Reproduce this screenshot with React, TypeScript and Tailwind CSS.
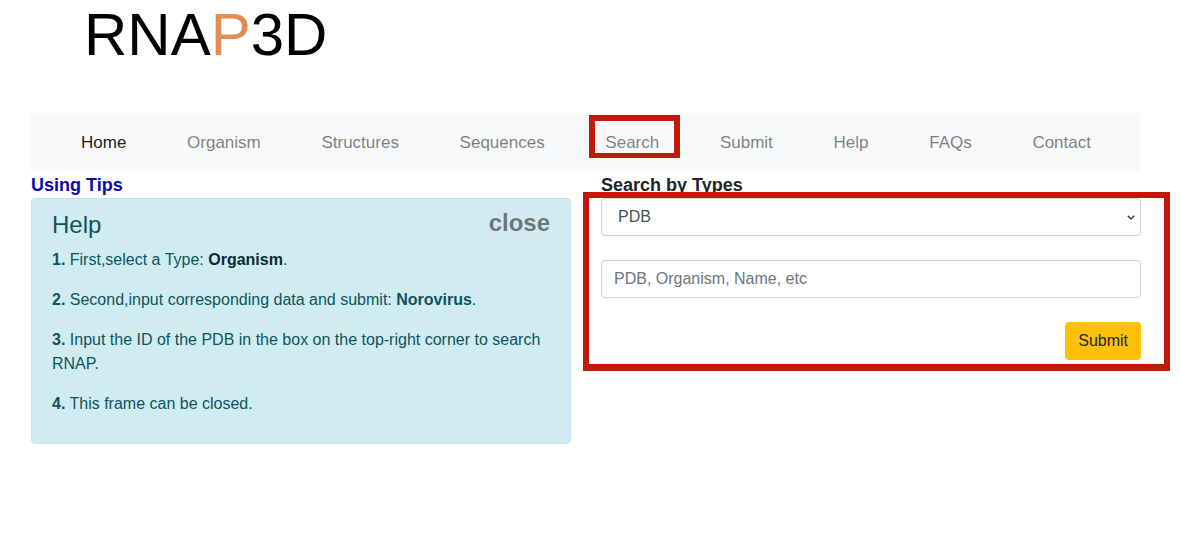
const navItems = ["Home", "Organism", "Structures", "Sequences", "Search", "Submit", "Help", "FAQs", "Contact"];

export default function App() {
  return (
    <main className="relative min-h-[542px] bg-white font-['Liberation_Sans',Arial,sans-serif] text-[16px] leading-6 text-[#212529]">
      <header className="h-[113px] pl-[84px]">
        <h1 className="text-[60px] leading-[69px] font-normal text-black">
          RNA<span className="text-[#e08e55]">P</span>3D
        </h1>
      </header>

      <div className="ml-[31px] w-[1110px]">
        <nav className="flex h-[58px] w-[1109px] items-center gap-[60.7px] bg-[#f8f9fa] pt-[2px] pl-[50px] text-[17px]">
          {navItems.map((item) => (
            <a key={item} href="#" className={item === "Home" ? "text-black/90" : "text-black/50"}>
              {item}
            </a>
          ))}
        </nav>

        <section className="grid grid-cols-2 gap-[30px]">
          <div>
            <h2 className="h-[27px] text-[18px] leading-[28px] font-bold text-[#0a0aa8]">Using Tips</h2>
            <div className="h-[246px] rounded border border-[#bee5eb] bg-[#d1ecf1] px-5 pt-[12px] text-[#0c5460]">
              <div className="flex items-start justify-between">
                <h3 className="mb-[9px] text-[24px] leading-[28px] font-normal">Help</h3>
                <button className="text-[24px] leading-[24px] font-bold text-black/50">close</button>
              </div>
              <p className="mb-4"><b>1.</b> First,select a Type: <b className="text-[#062c33]">Organism</b>.</p>
              <p className="mb-4"><b>2.</b> Second,input corresponding data and submit: <b>Norovirus</b>.</p>
              <p className="mb-4"><b>3.</b> Input the ID of the PDB in the box on the top-right corner to search RNAP.</p>
              <p><b>4.</b> This frame can be closed.</p>
            </div>
          </div>

          <div>
            <h2 className="h-[27px] text-[18px] leading-[28px] font-bold text-[#212529]">Search by Types</h2>
            <div className="relative">
              <select className="block h-[38px] w-full appearance-none rounded border border-[#ced4da] bg-white pl-4 text-[16px] text-[#495057]">
                <option>PDB</option>
                <option>Organism</option>
                <option>Name</option>
              </select>
              <svg viewBox="0 0 8 5" className="pointer-events-none absolute top-[17px] right-[6px] h-[5px] w-[8px]" fill="none" stroke="#343a40" strokeWidth="1.3">
                <path d="M.7.7L4 4 7.3.7" />
              </svg>
            </div>
            <input
              placeholder="PDB, Organism, Name, etc"
              className="mt-6 block h-[38px] w-full rounded border border-[#ced4da] bg-white px-3 text-[16px] text-[#495057] placeholder:text-[#6c757d]"
            />
            <div className="mt-6 flex justify-end">
              <button className="h-[38px] rounded bg-[#ffc107] px-[13px] text-[#212529]">Submit</button>
            </div>
          </div>
        </section>
      </div>

      {/* red annotation frames */}
      <div className="absolute top-[115px] left-[589px] h-[43px] w-[91px] border-x-[6px] border-t-[6px] border-b-[5px] border-[#bf1a0a]" />
      <div className="absolute top-[192px] left-[583px] h-[179px] w-[587px] border-[6px] border-b-[7px] border-[#bf1a0a]" />
    </main>
  );
}
